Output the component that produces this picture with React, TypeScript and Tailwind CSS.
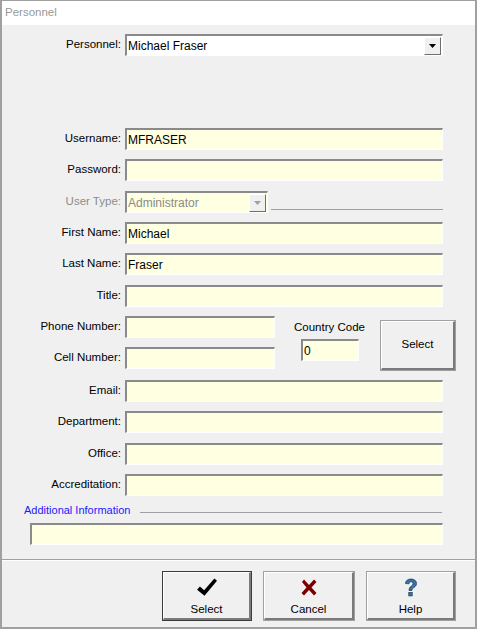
import React from "react";

const font = { fontFamily: '"Liberation Sans", Arial, sans-serif' };

function Field({
  value = "",
  width = "w-[318px]",
  disabled = false,
}: {
  value?: string;
  width?: string;
  disabled?: boolean;
}) {
  return (
    <div
      className={`${width} h-[22px] bg-[#ffffe1] border-t-2 border-l-2 border-t-[#8a8a8a] border-l-[#8a8a8a] border-b border-r border-b-white border-r-white flex items-center pl-[1px] text-[12px] leading-none ${
        disabled ? "text-[#8c8c8c]" : "text-black"
      }`}
    >
      {value}
    </div>
  );
}

function DropBtn({ disabled = false }: { disabled?: boolean }) {
  return (
    <div className="w-[17px] h-[18px] bg-[#f0f0f0] border border-t-white border-l-white border-b-[#6e6e6e] border-r-[#6e6e6e] flex items-center justify-center">
      <svg width="7" height="4" viewBox="0 0 7 4">
        <path d="M0 0h7L3.5 4z" fill={disabled ? "#a0a0a0" : "#000"} />
      </svg>
    </div>
  );
}

function Row({
  label,
  mt,
  children,
  muted = false,
}: {
  label: string;
  mt: string;
  children: React.ReactNode;
  muted?: boolean;
}) {
  return (
    <div className={`flex items-center ${mt}`}>
      <div
        className={`w-[119px] text-right text-[11.5px] ${
          muted ? "text-[#8c8c8c]" : "text-black"
        }`}
      >
        {label}
      </div>
      <div className="ml-[4px]">{children}</div>
    </div>
  );
}

function BigButton({
  icon,
  label,
  primary = false,
  width,
}: {
  icon: React.ReactNode;
  label: string;
  primary?: boolean;
  width: string;
}) {
  return (
    <div
      className={`${width} h-[50px] ${
        primary ? "border border-[#3c3c3c]" : "border border-[#a0a0a0]"
      }`}
    >
      <div className="w-full h-full bg-[#f0f0f0] border-t border-l border-t-white border-l-white border-b-2 border-r-2 border-b-[#7a7a7a] border-r-[#7a7a7a] flex flex-col items-center pt-[4px]">
        <div className="h-[22px] flex items-center justify-center">{icon}</div>
        <div className="text-[11.5px] text-black mt-[5px] leading-none">{label}</div>
      </div>
    </div>
  );
}

export default function App() {
  return (
    <div
      className="w-[477px] h-[629px] bg-[#f0f0f0] border-2 border-t border-[#a0a0a0] flex flex-col overflow-hidden"
      style={font}
    >
      <div className="h-[24px] bg-white flex items-center pl-[3px] text-[11.5px] text-[#999999] shrink-0">
        Personnel
      </div>

      <div className="flex flex-col">
        <Row label="Personnel:" mt="mt-[9px]">
          <div className="w-[318px] h-[22px] bg-white border-t-2 border-l-2 border-t-[#8a8a8a] border-l-[#8a8a8a] border-b border-r border-b-white border-r-white flex items-center justify-between pl-[1px] pr-[1px] text-[12px]">
            <span>Michael Fraser</span>
            <DropBtn />
          </div>
        </Row>

        <Row label="Username:" mt="mt-[72px]">
          <Field value="MFRASER" />
        </Row>
        <Row label="Password:" mt="mt-[9px]">
          <Field />
        </Row>
        <Row label="User Type:" mt="mt-[10px]" muted>
          <div className="flex items-end">
            <div className="w-[143px] h-[22px] bg-[#ffffe1] border-t-2 border-l-2 border-t-[#8a8a8a] border-l-[#8a8a8a] border-b border-r border-b-white border-r-white flex items-center justify-between pl-[1px] pr-[1px] text-[12px] text-[#8c8c8c]">
              <span>Administrator</span>
              <DropBtn disabled />
            </div>
            <div className="w-[172px] h-[1px] bg-[#a0a0a0] ml-[3px] mb-[3px]" />
          </div>
        </Row>
        <Row label="First Name:" mt="mt-[9px]">
          <Field value="Michael" />
        </Row>
        <Row label="Last Name:" mt="mt-[9px]">
          <Field value="Fraser" />
        </Row>
        <Row label="Title:" mt="mt-[10px]">
          <Field />
        </Row>

        <div className="flex items-start">
          <div className="flex flex-col">
            <Row label="Phone Number:" mt="mt-[9px]">
              <Field width="w-[150px]" />
            </Row>
            <Row label="Cell Number:" mt="mt-[9px]">
              <Field width="w-[150px]" />
            </Row>
          </div>
          <div className="flex flex-col items-center ml-[19px] mt-[12px]">
            <div className="text-[11.5px] text-black">Country Code</div>
            <div className="mt-[3px] self-start ml-[7px]">
              <Field value="0" width="w-[58px]" />
            </div>
          </div>
          <div className="ml-[15px] mt-[13px] w-[76px] h-[51px] border border-[#a0a0a0]">
            <div className="w-full h-full bg-[#f0f0f0] border-t border-l border-t-white border-l-white border-b-2 border-r-2 border-b-[#7a7a7a] border-r-[#7a7a7a] flex items-center justify-center text-[11.5px]">
              Select
            </div>
          </div>
        </div>

        <Row label="Email:" mt="mt-[9px]">
          <Field />
        </Row>
        <Row label="Department:" mt="mt-[9px]">
          <Field />
        </Row>
        <Row label="Office:" mt="mt-[10px]">
          <Field />
        </Row>
        <Row label="Accreditation:" mt="mt-[9px]">
          <Field />
        </Row>

        <div className="flex items-center mt-[6px] pl-[22px] w-[440px]">
          <span className="text-[11px] text-[#1a1aff]">Additional Information</span>
          <div className="ml-[10px] flex-1 h-[1px] bg-[#a0a0a0] mt-[4px]" />
        </div>
        <div className="ml-[28px] mt-[4px]">
          <Field width="w-[413px]" />
        </div>
      </div>

      <div className="mt-[14px] h-[1px] bg-[#a0a0a0] shrink-0" />
      <div className="h-[1px] bg-white shrink-0" />

      <div className="flex pl-[160px] mt-[10px] gap-[11px]">
        <BigButton
          primary
          width="w-[90px]"
          label="Select"
          icon={
            <svg width="22" height="20" viewBox="0 0 22 20">
              <path
                d="M1 11l3-3 4 4L19 1l2.5 2.5L8 17.5z"
                fill="#000"
                transform="rotate(-4 11 10)"
              />
            </svg>
          }
        />
        <BigButton
          width="w-[92px]"
          label="Cancel"
          icon={
            <svg width="16" height="17" viewBox="0 0 16 17">
              <path
                d="M1 3l2-2.5L8 6l5-5.5 2.5 2.5L10.5 8.5 15.5 14 13 16.5 8 11l-5 5.5L0.5 14 5.5 8.5z"
                fill="#7a0000"
              />
            </svg>
          }
        />
        <BigButton
          width="w-[90px]"
          label="Help"
          icon={
            <svg width="14" height="20" viewBox="0 0 14 20">
              <path
                d="M1.5 5.5C1.5 2.5 4 1 7 1s5.5 1.5 5.5 4.5c0 2.2-1.4 3.2-2.7 4.1C8.6 10.4 8 11 8 12.5H5c0-2.3.8-3.3 2.3-4.4C8.4 7.3 9 6.8 9 5.6 9 4.5 8.2 3.8 7 3.8 5.7 3.8 5 4.6 5 5.8z"
                fill="#3a72a0"
                stroke="#123a5a"
                strokeWidth="0.7"
              />
              <rect x="4.8" y="14.5" width="3.4" height="3.4" fill="#3a72a0" stroke="#123a5a" strokeWidth="0.7" />
            </svg>
          }
        />
      </div>
    </div>
  );
}
